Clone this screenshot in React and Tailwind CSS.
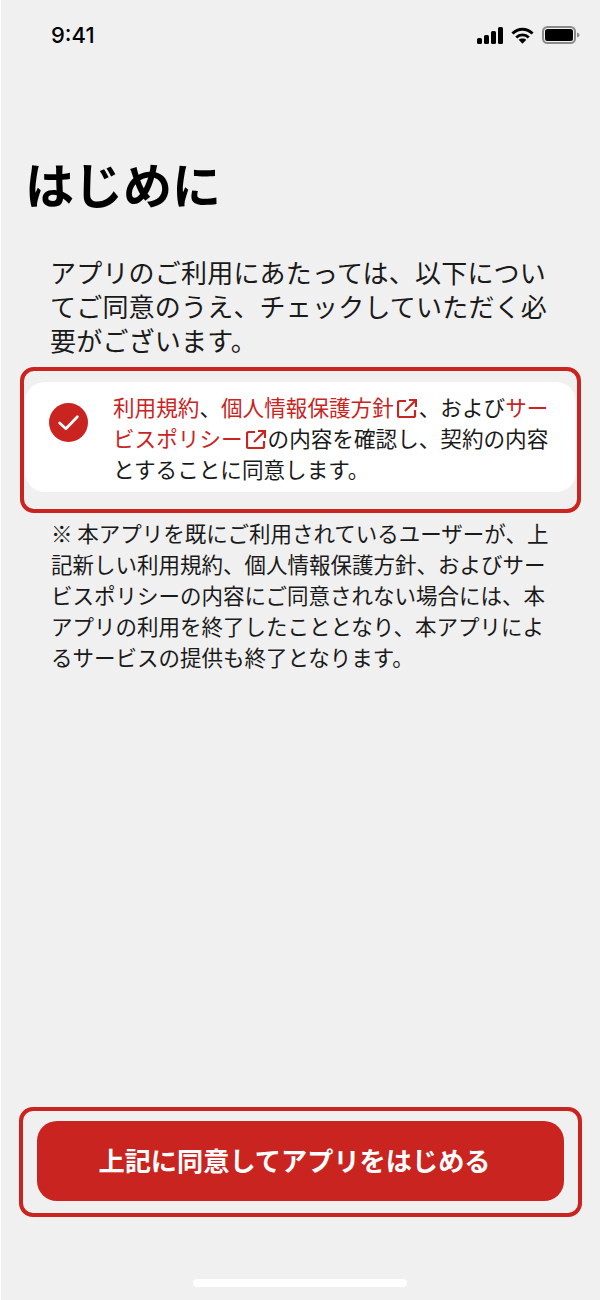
const sans = "font-['Noto_Sans_CJK_JP','Noto_Sans',sans-serif]";

const ExternalIcon = () => (
  <svg viewBox="0 0 20 20" className="mr-[2px] ml-[3px] inline-block h-[20px] w-[20px] align-[-3px]" fill="none" stroke="#c9241f" strokeWidth="2.2">
    <path d="M9 2H2.500A1.500 1.500 0 0 0 1 3.500v13A1.500 1.500 0 0 0 2.500 18h14a1.500 1.500 0 0 0 1.500-1.500V11" />
    <path d="M8 12L19 1" />
    <path d="M12 1h7v7" />
  </svg>
);

const StatusIcons = () => (
  <div className="flex items-center gap-[8px]">
    <svg viewBox="0 0 26 17" className="h-[17px] w-[26px]" fill="#000">
      <rect x="0" y="11" width="5" height="6" rx="1.5" />
      <rect x="7" y="8" width="5" height="9" rx="1.5" />
      <rect x="14" y="4" width="5" height="13" rx="1.5" />
      <rect x="21" y="0" width="5" height="17" rx="1.5" />
    </svg>
    <svg viewBox="0 0 24 17" className="h-[17px] w-[23px]" fill="none" stroke="#000" strokeWidth="3">
      <path d="M1.500 6.500C7.500 0.500 16.500 0.500 22.500 6.500" />
      <path d="M5.500 10.500C9 7 15 7 18.500 10.500" />
      <path d="M8 13L12 17L16 13C14 11 10 11 8 13Z" fill="#000" stroke="none" />
    </svg>
    <svg viewBox="0 0 38 18" className="h-[18px] w-[38px]">
      <rect x="1" y="1" width="32" height="16" rx="4.500" fill="none" stroke="#8a8a8a" strokeWidth="2" />
      <rect x="3" y="3" width="28" height="12" rx="2.500" fill="#000" />
      <path d="M35 6.500c1.600.4 2.500 1.300 2.500 2.500s-.9 2.100-2.500 2.500z" fill="#8a8a8a" />
    </svg>
  </div>
);

export default function App() {
  return (
    <div className={`flex h-[1300px] w-[600px] flex-col border-l border-white bg-[#f0f0f0] text-[#1a1a1a] ${sans}`}>
      <div className="flex items-center justify-between pl-[50px] pr-[20px] pt-[20px]">
        <span className="font-['Inter',sans-serif] text-[22px] leading-[30px] font-medium text-black">9:41</span>
        <StatusIcons />
      </div>

      <h1 className="mt-[98px] pl-[24px] text-[49px] leading-[70px] font-bold text-black">はじめに</h1>

      <p className="mt-[37px] pl-[49px] text-[26px] leading-[34px] tracking-[0.2px]">
        アプリのご利用にあたっては、以下につい<br />
        てご同意のうえ、チェックしていただく必<br />
        要がございます。
      </p>

      <div className="mx-[19px] mt-[10px] rounded-[14px] border-4 border-[#c9241f] px-[1px] pt-[11px] pb-[17px]">
        <label className="flex h-[110px] items-start rounded-[20px] bg-white pl-[24px]">
          <span className="mt-[21px] flex h-[39px] w-[39px] shrink-0 items-center justify-center rounded-full bg-[#c9241f]">
            <svg viewBox="0 0 24 24" className="h-[25px] w-[25px]" fill="none" stroke="#fff" strokeWidth="2.6" strokeLinecap="round" strokeLinejoin="round">
              <path d="M3.500 12.500L9.500 18L20.500 6.500" />
            </svg>
          </span>
          <span className="mt-[9px] ml-[25px] text-[21.6px] leading-[31px] whitespace-nowrap">
            <span className="text-[#c9241f]">利用規約</span>、<span className="text-[#c9241f]">個人情報保護方針<ExternalIcon /></span>、および<span className="text-[#c9241f]">サー</span><br />
            <span className="text-[#c9241f]">ビスポリシー<ExternalIcon /></span>の内容を確認し、契約の内容<br />
            とすることに同意します。
          </span>
        </label>
      </div>

      <p className="mt-[4px] pl-[50px] text-[21.5px] leading-[31px] whitespace-nowrap">
        ※ 本アプリを既にご利用されているユーザーが、上<br />
        記新しい利用規約、個人情報保護方針、およびサー<br />
        ビスポリシーの内容にご同意されない場合には、本<br />
        アプリの利用を終了したこととなり、本アプリによ<br />
        るサービスの提供も終了となります。
      </p>

      <div className="mx-[18px] mt-auto rounded-[14px] border-4 border-[#c9241f] px-[14px] pt-[10px] pb-[12px]">
        <button className="flex h-[80px] w-full items-center justify-center rounded-[20px] bg-[#c9241f] pr-[12px] pb-[1px] text-[26.2px] font-bold text-white">
          上記に同意してアプリをはじめる
        </button>
      </div>

      <div className="mt-[62px] mb-[13px] ml-[192px] h-[8px] w-[214px] rounded-full bg-white" />
    </div>
  );
}
